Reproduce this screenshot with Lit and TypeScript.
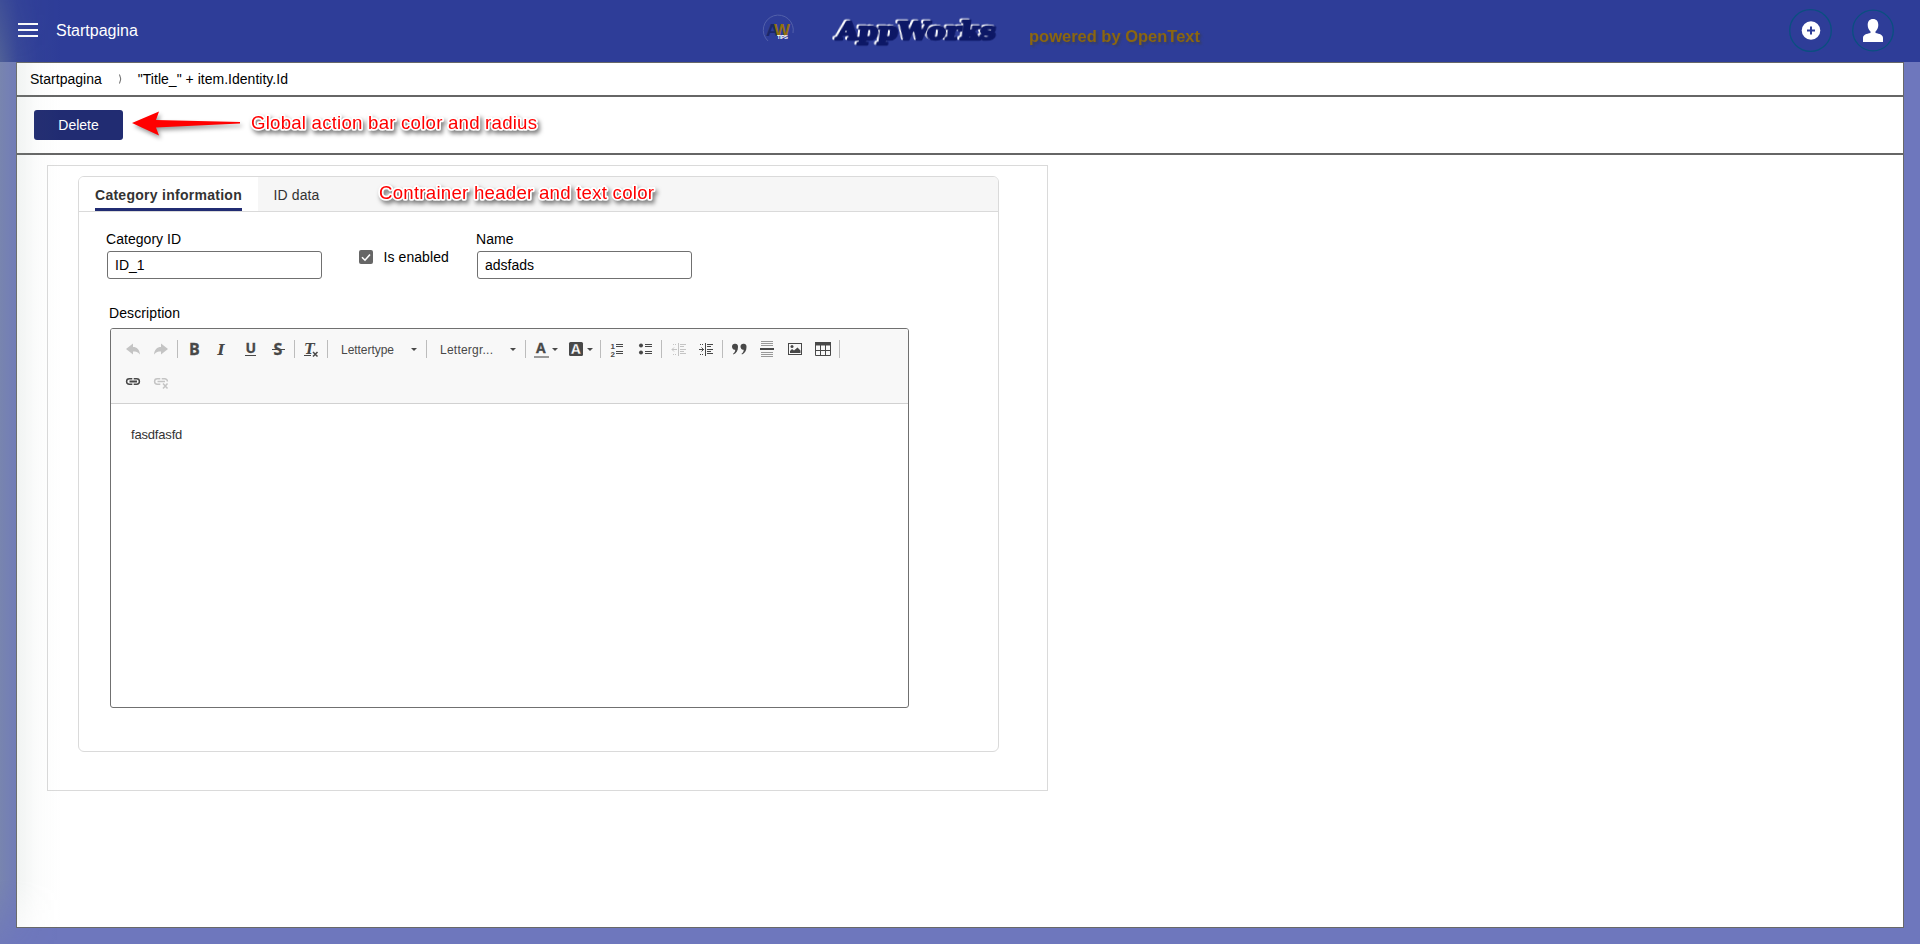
import { LitElement, html, svg, css } from "lit";
import { customElement } from "lit/decorators.js";

const icon = (w: number, h: number, body: unknown, cls = "") =>
  html`<svg class="ic ${cls}" width=${w} height=${h} viewBox="0 0 ${w} ${h}">${body}</svg>`;

@customElement("rich-editor")
class RichEditor extends LitElement {
  static styles = css`
    :host { display: flex; flex-direction: column; box-sizing: border-box; width: 799px; height: 380px;
      border: 1px solid #707070; border-radius: 3px; overflow: hidden; background: #fff; }
    .bar { height: 74px; background: #f8f8f8; border-bottom: 1px solid #d1d1d1; flex: none; }
    svg { display: block; }
    .ic { color: #484848; }
    .body { padding: 21px 20px; font-size: 13px; line-height: 20px; letter-spacing: -0.18px; color: #333; }
    text { font-family: "Liberation Sans", Arial, sans-serif; fill: #484848; }
    .dd { font-size: 12px; }
    .serif { font-family: "DejaVu Serif", "Liberation Serif", serif; font-weight: bold; font-style: italic; }
    .b { font-family: "Open Sans", "Liberation Sans", sans-serif; font-weight: bold; stroke: #484848; stroke-width: .3px; }
    .num { font-size: 8px; font-weight: bold; }
  `;
  render() {
    const sep = (x: number) => svg`<rect x=${x} y="11" width="1" height="18" fill="#bcbcbc"/>`;
    const caret = (x: number) => svg`<path d="M${x} 19h6l-3 3z" fill="#484848"/>`;
    return html`<div class="bar">
      ${icon(797, 74, svg`
        <g fill="#c4c4c4">
          <path d="M15 20l7-5.5v3.5c4 0 6.5 2.500 7 7.500-2-2.500-4-3-7-3v3z"/>
          <path d="M57 20l-7-5.500v3.500c-4 0-6.500 2.500-7 7.500 2-2.500 4-3 7-3v3z"/>
        </g>
        ${sep(66)}${sep(183)}${sep(216)}${sep(315)}${sep(414)}${sep(489)}${sep(550)}${sep(611)}${sep(728)}
        <text class="b" x="78" y="26" font-size="16">B</text>
        <text class="serif" x="106.500" y="26" font-size="15">I</text>
        <text class="b" x="134.500" y="24" font-size="14">U</text><rect x="134" y="26" width="11" height="1" fill="#484848"/>
        <text class="b" x="162.500" y="26" font-size="16">S</text><rect x="161" y="20" width="13" height="1" fill="#484848"/>
        <text class="serif" x="193.500" y="24.500" font-size="14" textLength="10" lengthAdjust="spacingAndGlyphs">T</text><rect x="193" y="26" width="7" height="1" fill="#484848"/>
        <path d="M202 23l4.500 4.500M206.500 23l-4.500 4.500" stroke="#484848" stroke-width="1.500"/>
        <text class="dd" x="230" y="25" textLength="53">Lettertype</text>${caret(300)}
        <text class="dd" x="329" y="25" textLength="53">Lettergr...</text>${caret(399)}
        <text class="b" x="425" y="24" font-size="14">A</text><rect x="423" y="27" width="15" height="2" fill="#999"/>${caret(441)}
        <rect x="458" y="13" width="14" height="14" rx="1.500" fill="#484848"/>
        <text class="b" x="460" y="25" font-size="14" style="fill:#fff">A</text>${caret(476)}
        <text class="num" x="499.500" y="19.500">1</text><text class="num" x="499.500" y="27.500">2</text>
        <path d="M505 15.500h7M505 17.500h7M505 22.500h7M505 24.500h7" stroke="#484848"/>
        <g fill="#484848"><circle cx="530" cy="16.500" r="2"/><circle cx="530" cy="23.500" r="2"/></g>
        <path d="M534 15.500h7M534 17.500h7M534 22.500h7M534 24.500h7" stroke="#484848"/>
        <g stroke="#c4c4c4" fill="none"><path d="M567.500 14v13M569 15.500h6M569 17.500h4M569 20.500h6M569 22.500h4M569 24.500h6M561 20.500h5M562 15.500h1M564 15.500h1M562 25.500h1M564 25.500h1"/><path d="M563 18.500l-2 2 2 2"/></g>
        <g stroke="#484848" fill="none"><path d="M594.500 14v13M596 15.500h6M596 17.500h4M596 20.500h6M596 22.500h4M596 24.500h6M588 20.500h5M589 15.500h1M591 15.500h1M589 25.500h1M591 25.500h1"/><path d="M590.500 18.500l2 2-2 2"/></g>
        <g fill="#484848"><path d="M621 17.500a3 3 0 1 1 6 .5c0 3.500-1.500 6-4.500 7.500l-.5-.8c1.500-1 2.200-2.300 2.200-4-1.800.5-3.200-1-3.200-3.200z"/><path d="M629.500 17.500a3 3 0 1 1 6 .5c0 3.500-1.500 6-4.500 7.500l-.5-.8c1.500-1 2.200-2.300 2.200-4-1.800.5-3.200-1-3.200-3.200z"/></g>
        <path d="M650 12.500h12M650 14.500h12M650 16.500h12M650 23.500h12M650 25.500h12M650 27.500h12" stroke="#999"/>
        <rect x="649" y="19" width="14" height="2" fill="#484848"/>
        <rect x="677.500" y="14.500" width="13" height="11" fill="none" stroke="#484848"/><circle cx="681" cy="17.500" r="1.500" fill="#484848"/>
        <path d="M679 24v-2l2-2 2 1.500 3.500-3 3 3v2.500z" fill="#484848"/>
        <rect x="704" y="13" width="16" height="3.500" fill="#484848"/><path d="M704.500 15v11.500h15V15M704 21.500h16M709.500 16v10M714.500 16v10" fill="none" stroke="#484848"/>
        <g stroke="#484848" fill="none" stroke-width="1.500"><path d="M21.300 49.800h-3a2.700 2.700 0 0 0 0 5.400h3M22.700 49.800h3a2.700 2.700 0 0 1 0 5.400h-3"/><path d="M18.500 52.500h7.500" stroke-width="1.800"/></g>
        <g stroke="#c4c4c4" fill="none" stroke-width="1.500"><path d="M49.300 49.800h-3a2.700 2.700 0 0 0 0 5.400h3M50.700 49.800h3a2.700 2.700 0 0 1 2.700 2.700"/><path d="M46.500 52.500h7.500M52 54.500l4.500 5M56.500 54.500l-4.500 5"/></g>
      `)}
    </div><div class="body">fasdfasfd</div>`;
  }
}

@customElement("app-root")
class AppRoot extends LitElement {
  static styles = css`
    :host { display: flex; flex-direction: column; box-sizing: border-box; position: relative; width: 1920px; height: 944px; overflow: hidden;
      background: #6e77bd; font-family: "Liberation Sans", Arial, sans-serif; font-size: 14px; color: #111; }
    * { box-sizing: border-box; }
    svg { display: block; }
    header { height: 62px; flex: none; background: #2e3d98; display: flex; align-items: flex-start; color: #fff; }
    .menu { margin: 23px 0 0 18px; }
    .title { font-size: 16px; line-height: 20px; margin: 21px 0 0 18px; width: 708px; }
    .logo { width: 450px; overflow: visible; }
    .brand { font-family: "DejaVu Serif", "Liberation Serif", serif; font-weight: bold; font-size: 24px; fill: #0d1866; stroke: #0d1866; stroke-width: 2.6px; stroke-linejoin: round; filter: drop-shadow(-1.500px -0.800px 0 #fff); }
    .by { font-family: "Liberation Sans", Arial, sans-serif; font-weight: bold; font-size: 16px; fill: #8b6610; filter: drop-shadow(2px 2px 1px rgba(60,60,60,.6)); }
    .actions { margin-left: auto; display: flex; gap: 20px; padding: 9px 26px 0 0; }
    main { margin: 0 16px 16px; flex: 1; border: 1px solid #686868; background: #fff; display: flex; flex-direction: column; }
    .crumbs { height: 34px; border-bottom: 2px solid #666; display: flex; align-items: center; padding: 0 13px 1px; letter-spacing: .02px; color: #000; }
    .chev { margin: 0 15px 0 17px; }
    .bar { height: 58px; border-bottom: 2px solid #666; padding: 13px 17px; }
    .del { width: 89px; height: 30px; border-radius: 3px; background: #212c72; color: #fff; display: flex; align-items: center; justify-content: center; }
    .panel { width: 1001px; height: 626px; margin: 10px 0 0 30px; border: 1px solid #dadada; padding: 10px 30px; }
    .box { width: 921px; height: 576px; border: 1px solid #dadada; border-radius: 6px; overflow: hidden; }
    .tabs { height: 35px; display: flex; background: #f6f6f6; border-bottom: 1px solid #dadada; color: #333; }
    .tab { padding: 0 15.500px; height: 34px; line-height: 37px; letter-spacing: .12px; }
    .on { width: 179px; padding: 0 16px; background: #fff; font-weight: bold; letter-spacing: .27px; }
    .on span { display: block; width: 147px; height: 34px; line-height: 37px; border-bottom: 3px solid #212c72; white-space: nowrap; }
    .row { display: flex; padding: 19px 0 0 28px; height: 83px; color: #000; }
    .field { width: 215px; }
    .field label { display: block; line-height: 16px; margin-bottom: 4px; margin-left: -1px; letter-spacing: .04px; }
    .input { height: 28px; border: 1px solid #707070; border-radius: 3px; line-height: 27px; padding-left: 7px; color: #000; }
    .check { width: 118px; margin-left: 37px; padding: 18px 0 0 0; display: flex; gap: 10.500px; line-height: 16px; letter-spacing: .08px; }
    .check svg { margin-top: 1px; }
    .desc { padding: 10px 0 0 31px; color: #000; }
    .desc label { display: block; line-height: 16px; height: 23px; margin-left: -1px; letter-spacing: .1px; }
    .glow { position: absolute; left: 0; top: 0; width: 62px; height: 944px; pointer-events: none; background: linear-gradient(90deg, rgba(139,158,151,.36), rgba(139,158,151,.12) 28%, rgba(139,158,151,.03) 60%, rgba(139,158,151,0));
      mask-image: linear-gradient(rgba(0,0,0,.5), #000 60px, #000 880px, rgba(0,0,0,.2)); }
    .notes { position: absolute; left: 0; top: 0; pointer-events: none; }
    .note { fill: #f00; font-size: 18.67px; paint-order: stroke; stroke: #fff; stroke-width: 3.5px; stroke-linejoin: round; filter: drop-shadow(2px 3px 2px rgba(0,0,0,.5)); }
    .arrow { filter: drop-shadow(2px 3px 2px rgba(0,0,0,.4)); }
  `;
  render() {
    return html`
      <header>
        <svg class="menu" width="20" height="14"><path d="M0 1h20M0 7h20M0 13h20" stroke="#fff" stroke-width="2"/></svg>
        <div class="title">Startpagina</div>
        <svg class="logo" width="450" height="62" viewBox="764 0 450 62">
          <path d="M768 41a15 15 0 1 1 25-8" fill="none" stroke="#5260aa" stroke-width="1"/>
          <g font-family="Liberation Sans" font-weight="bold">
            <text x="766" y="36" font-size="17" fill="#1b2768" textLength="13" lengthAdjust="spacingAndGlyphs">A</text>
            <text x="774" y="36" font-size="17" fill="#93700f" textLength="16" lengthAdjust="spacingAndGlyphs">W</text>
            <text x="777" y="38.500" font-size="5.500" fill="#fff" textLength="11">TIPS</text>
          </g>
          <g transform="translate(836 39.500) skewX(-7)"><text class="brand" textLength="159" lengthAdjust="spacingAndGlyphs">AppWorks</text></g>
          <text class="by" x="1029" y="42" textLength="171" lengthAdjust="spacingAndGlyphs">powered by OpenText</text>
        </svg>
        <div class="actions">
          <svg width="43" height="43"><circle cx="21.500" cy="21.500" r="20.800" fill="none" stroke="#0a4f80" stroke-width="1.300"/><circle cx="22" cy="21.500" r="9.300" fill="#fff"/><path d="M22 17.500v8M18 21.500h8" stroke="#2e3d98" stroke-width="2"/></svg>
          <svg width="42" height="43"><circle cx="21" cy="21.500" r="20.300" fill="none" stroke="#0a4f80" stroke-width="1.300"/><path d="M21 10c3.500 0 5.300 2.300 5.300 6 0 3-1.200 5-2.800 6.500v1.500c4 1 7.500 1.500 7.500 5v4H11v-4c0-3.500 3.500-4 7.500-5v-1.500c-1.600-1.500-2.800-3.500-2.800-6.500 0-3.700 1.800-6 5.300-6z" fill="#fff"/></svg>
        </div>
      </header>
      <main>
        <div class="crumbs"><span>Startpagina</span><svg class="chev" width="4" height="10"><path d="M.5.5q2.500 4.500 0 9" fill="none" stroke="#666"/></svg><span>"Title_" + item.Identity.Id</span></div>
        <div class="bar"><div class="del">Delete</div></div>
        <div class="panel"><div class="box">
          <div class="tabs"><div class="tab on"><span>Category information</span></div><div class="tab">ID data</div></div>
          <div class="row">
            <div class="field"><label>Category ID</label><div class="input">ID_1</div></div>
            <div class="check"><svg width="14" height="14"><rect width="14" height="14" rx="2" fill="#666"/><path d="M3 7.200l3 3L11 4.500" fill="none" stroke="#fff" stroke-width="1.600"/></svg><span>Is enabled</span></div>
            <div class="field"><label>Name</label><div class="input">adsfads</div></div>
          </div>
          <div class="desc"><label>Description</label><rich-editor></rich-editor></div>
        </div></div>
      </main>
      <div class="glow"></div>
      <svg class="notes" width="1000" height="220">
        <path class="arrow" d="M132 123l27-11.500-3 8.500 84 2v1.500l-84 4 3 8z" fill="#f00"/>
        <text class="note" x="251" y="129" textLength="286">Global action bar color and radius</text>
        <text class="note" x="379" y="199" textLength="275">Contrainer header and text color</text>
      </svg>`;
  }
}
